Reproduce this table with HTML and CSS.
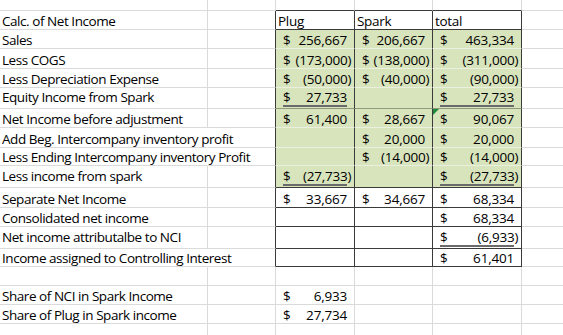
FILE: index.html
```html
<!DOCTYPE html>
<html>
<head>
<meta charset="utf-8">
<link rel="stylesheet" href="styles.css">
</head>
<body>
<table class="sheet">
<colgroup><col class="ca"><col class="cb"><col class="cc"><col class="cd"><col class="ce"><col class="cf"></colgroup>
<tr class="h11"><td></td><td></td><td class="bb"></td><td class="bb"></td><td class="bb"></td><td></td></tr>
<tr class="h19"><td class="lab">Calc. of Net Income</td><td class="bl"></td><td class="hd bx bb">Plug</td><td class="hd bx bb">Spark</td><td class="hd bx bb">total</td><td></td></tr>
<tr class="h19"><td class="lab">Sales</td><td class="bl"></td>
<td class="bx g"><div class="acc"><span>$</span><span>256,667</span></div></td>
<td class="bx g"><div class="acc"><span>$</span><span>206,667</span></div></td>
<td class="bx g"><div class="acc"><span>$</span><span>463,334</span></div></td><td></td></tr>
<tr class="h20"><td class="lab">Less COGS</td><td class="bl"></td>
<td class="bx g"><div class="acc"><span>$</span><span>(173,000<span class="rp">)</span></span></div></td>
<td class="bx g"><div class="acc"><span>$</span><span>(138,000<span class="rp">)</span></span></div></td>
<td class="bx g"><div class="acc"><span>$</span><span>(311,000<span class="rp">)</span></span></div></td><td></td></tr>
<tr class="h19"><td class="lab">Less Depreciation Expense</td><td class="bl"></td>
<td class="bx g"><div class="acc"><span>$</span><span>(50,000<span class="rp">)</span></span></div></td>
<td class="bx g"><div class="acc"><span>$</span><span>(40,000<span class="rp">)</span></span></div></td>
<td class="bx g"><div class="acc"><span>$</span><span>(90,000<span class="rp">)</span></span></div></td><td></td></tr>
<tr class="h21 ul"><td class="lab">Equity Income from Spark</td><td class="bl"></td>
<td class="bx g gd"><div class="acc u"><span>$</span><span>27,733</span></div></td>
<td class="bx g gd"></td>
<td class="bx g gd"><div class="acc u"><span>$</span><span>27,733</span></div></td><td></td></tr>
<tr class="h19"><td class="lab">Net Income before adjustment</td><td class="bl"></td>
<td class="bx g"><div class="acc"><span>$</span><span>61,400</span></div></td>
<td class="bx g"><div class="acc"><span>$</span><span>28,667</span></div></td>
<td class="bx g tri"><div class="acc"><span>$</span><span>90,067</span></div></td><td></td></tr>
<tr class="h20"><td class="lab ov">Add Beg. Intercompany inventory profit</td><td class="bl"></td>
<td class="bx g"></td>
<td class="bx g"><div class="acc"><span>$</span><span>20,000</span></div></td>
<td class="bx g"><div class="acc"><span>$</span><span>20,000</span></div></td><td></td></tr>
<tr class="h18"><td class="lab ov">Less Ending Intercompany inventory Profit</td><td class="bl"></td>
<td class="bx g"></td>
<td class="bx g"><div class="acc"><span>$</span><span>(14,000<span class="rp">)</span></span></div></td>
<td class="bx g"><div class="acc"><span>$</span><span>(14,000<span class="rp">)</span></span></div></td><td></td></tr>
<tr class="h22 ul"><td class="lab">Less income from spark</td><td class="bl"></td>
<td class="bx g bb"><div class="acc u"><span>$</span><span>(27,733<span class="rp">)</span></span></div></td>
<td class="bx g bb"></td>
<td class="bx g bb"><div class="acc u"><span>$</span><span>(27,733<span class="rp">)</span></span></div></td><td></td></tr>
<tr class="h20"><td class="lab">Separate Net Income</td><td class="bl"></td>
<td class="bx bb"><div class="acc"><span>$</span><span>33,667</span></div></td>
<td class="bx bb"><div class="acc"><span>$</span><span>34,667</span></div></td>
<td class="bx bb"><div class="acc"><span>$</span><span>68,334</span></div></td><td></td></tr>
<tr class="h19"><td class="lab">Consolidated net income</td><td class="bl"></td>
<td class="bx bb"></td>
<td class="bx bb"></td>
<td class="bx bb"><div class="acc"><span>$</span><span>68,334</span></div></td><td></td></tr>
<tr class="h22 ul"><td class="lab">Net income attributalbe to NCI</td><td class="bl"></td>
<td class="bx bb"></td>
<td class="bx bb"></td>
<td class="bx bb"><div class="acc u"><span>$</span><span>(6,933<span class="rp">)</span></span></div></td><td></td></tr>
<tr class="h18"><td class="lab ov">Income assigned to Controlling Interest</td><td class="bl"></td>
<td class="bx bb"></td>
<td class="bx bb"></td>
<td class="bx bb"><div class="acc"><span>$</span><span>61,401</span></div></td><td></td></tr>
<tr class="h19"><td></td><td></td><td></td><td></td><td></td><td></td></tr>
<tr class="h19"><td class="lab">Share of NCI in Spark Income</td><td></td>
<td><div class="acc"><span>$</span><span>6,933</span></div></td><td></td><td></td><td></td></tr>
<tr class="h19"><td class="lab">Share of Plug in Spark income</td><td></td>
<td><div class="acc"><span>$</span><span>27,734</span></div></td><td></td><td></td><td></td></tr>
<tr class="h19"><td></td><td></td><td></td><td></td><td></td><td></td></tr>
</table>
</body>
</html>
```
FILE: styles.css
```css
html, body {
  margin: 0;
  padding: 0;
  background: #fff;
  overflow: hidden;
}
.sheet {
  border-collapse: separate;
  border-spacing: 0;
  table-layout: fixed;
  width: 582px;
  font-family: "Open Sans", "Noto Sans", sans-serif;
  font-size: 13.5px;
  line-height: 16px;
  color: #000;
}
.ca { width: 208px; }
.cb { width: 68px; }
.cc { width: 79px; }
.cd { width: 78px; }
.ce { width: 89px; }
.cf { width: 60px; }
.sheet td {
  box-sizing: border-box;
  border-right: 1px solid #dadada;
  border-bottom: 1px solid #dadada;
  padding: 0;
  vertical-align: bottom;
  white-space: nowrap;
  overflow: visible;
}
.h11 td { height: 11px; }
.h18 td { height: 18px; }
.h19 td { height: 19px; }
.h20 td { height: 20px; }
.h21 td { height: 21px; }
.h22 td { height: 22px; }
.ul td { padding-bottom: 3px; }
.sheet td.lab {
  padding-left: 2px;
  letter-spacing: -0.45px;
}
.sheet td.hd {
  padding-left: 2px;
  letter-spacing: -0.3px;
}
.sheet td.ov { border-right-color: transparent; }
.sheet td.bl, .sheet td.bx { border-right-color: #3a3a3a; }
.sheet td.g {
  background: #d8e4bc;
  border-bottom-color: #eaefdf;
}
.sheet td.gd { border-bottom-color: #8f9a7c; }
.sheet td.bb { border-bottom-color: #3a3a3a; }
.acc {
  display: flex;
  justify-content: space-between;
  margin: 0 7px 0 7px;
  letter-spacing: -0.2px;
}
.rp { margin-right: -4.4px; }
.ul .acc {
  margin-bottom: -2px;
  border-bottom: 2px solid transparent;
}
.ul .acc.u { border-bottom-color: #6a6a6a; }
.tri { position: relative; }
.tri::before {
  content: "";
  position: absolute;
  left: 0;
  top: 0;
  border-top: 6px solid #1f8a3b;
  border-right: 6px solid transparent;
}
```
